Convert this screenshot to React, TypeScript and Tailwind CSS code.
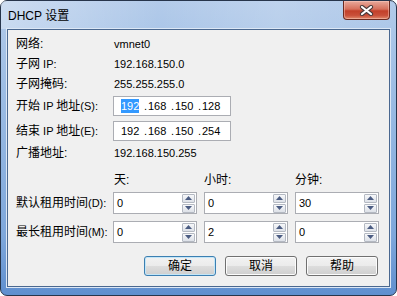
import React from "react";

const FONT = { fontFamily: '"Liberation Sans", "Noto Sans CJK SC", sans-serif' };

const Cjk = ({ children }: { children: React.ReactNode }) => (
  <span className="text-[12px]">{children}</span>
);

const IpBox = ({ parts, selectFirst }: { parts: string[]; selectFirst?: boolean }) => (
  <div className="flex h-[20px] w-[118px] items-center border border-[#abadb3] bg-white pl-[7px]">
    {parts.map((p, i) => (
      <div key={i} className="flex items-center">
        {i > 0 && <span className="w-[4px]">.</span>}
        <span className="w-[23px]">
          <span className={selectFirst && i === 0 ? "bg-[#3399ff] py-[1px] text-white" : ""}>{p}</span>
        </span>
      </div>
    ))}
  </div>
);

const SpinBtn = ({ up }: { up?: boolean }) => (
  <div className="flex h-[9px] w-[13px] items-center justify-center rounded-[1px] border border-[#b4b9c2] bg-[linear-gradient(#f7f8fa,#dde1e8)]">
    <svg width="7" height="4" viewBox="0 0 7 4">
      <path d={up ? "M0 4 L3.5 0 L7 4 Z" : "M0 0 L3.5 4 L7 0 Z"} fill="#4b5c82" />
    </svg>
  </div>
);

const Spin = ({ value }: { value: string }) => (
  <div className="flex h-[22px] w-[84px] border border-[#abadb3] bg-white">
    <div className="flex-1 pl-[3px] leading-[20px]">{value}</div>
    <div className="flex flex-col justify-center gap-[1px] pr-[1px]">
      <SpinBtn up />
      <SpinBtn />
    </div>
  </div>
);

const Button = ({ label, primary }: { label: string; primary?: boolean }) => (
  <div
    className={`flex h-[20px] w-[72px] items-center justify-center rounded-[3px] border bg-[linear-gradient(#f2f2f2_0%,#ebebeb_50%,#dddddd_51%,#cfcfcf_100%)] ${
      primary
        ? "border-[#3c7fb1] shadow-[inset_0_0_0_1px_#c3e6f8]"
        : "border-[#707070] shadow-[inset_0_0_0_1px_#fcfcfc]"
    }`}
  >
    <Cjk>{label}</Cjk>
  </div>
);

const Row = ({ label, children, className = "" }: { label: React.ReactNode; children?: React.ReactNode; className?: string }) => (
  <div className={`flex h-[20px] items-center ${className}`}>
    <div className="w-[97px]">{label}</div>
    {children}
  </div>
);

export default function App() {
  return (
    <div className="h-[296px] w-[397px] overflow-hidden bg-white text-[11px] text-black" style={FONT}>
      <div className="flex h-full flex-col rounded-[7px] border border-[#27354b] bg-[linear-gradient(180deg,#b3cbea_0%,#9dbde4_30%,#7ea7db_80%,#5f8fcf_100%)]">
        {/* title bar */}
        <div className="flex h-[28px] items-start justify-between bg-[linear-gradient(90deg,rgba(255,255,255,0.35),rgba(255,255,255,0)_40%,rgba(255,255,255,0.15)_70%,rgba(255,255,255,0))]">
          <div className="pl-[7px] pt-[6px] text-[12px]">
            DHCP <Cjk>设置</Cjk>
          </div>
          <div className="mr-[6px] flex h-[19px] w-[47px] items-center justify-center rounded-b-[4px] border border-t-0 border-[#6b2a20] bg-[linear-gradient(#e8aa9c_0%,#d6705c_45%,#c2402a_55%,#c9503a_80%,#e08a6c_100%)] shadow-[inset_0_0_0_1px_rgba(255,210,200,0.45)]">
            <svg width="15" height="11" viewBox="0 0 15 11">
              <path d="M3 2 L12 9 M12 2 L3 9" stroke="#4a3a3a" strokeWidth="4.2" strokeLinecap="round" />
              <path d="M3 2 L12 9 M12 2 L3 9" stroke="#ffffff" strokeWidth="2.2" strokeLinecap="round" />
            </svg>
          </div>
        </div>

        {/* client area */}
        <div className="mx-[6px] mb-[8px] flex-1 border border-[#4a6890] bg-[#f0f0f0] pl-[8px] pt-[4px] shadow-[0_0_0_1px_#dce7f5]">
          <Row label={<Cjk>网络:</Cjk>}>
            <span className="pl-[1px]">vmnet0</span>
          </Row>
          <Row label={<><Cjk>子网</Cjk> IP:</>}>
            <span className="pl-[1px]">192.168.150.0</span>
          </Row>
          <Row label={<Cjk>子网掩码:</Cjk>}>
            <span className="pl-[1px]">255.255.255.0</span>
          </Row>
          <Row className="mt-[2px]" label={<><Cjk>开始</Cjk> IP <Cjk>地址</Cjk>(S):</>}>
            <IpBox parts={["192", "168", "150", "128"]} selectFirst />
          </Row>
          <Row className="mt-[5px]" label={<><Cjk>结束</Cjk> IP <Cjk>地址</Cjk>(E):</>}>
            <IpBox parts={["192", "168", "150", "254"]} />
          </Row>
          <Row className="mt-[2px]" label={<Cjk>广播地址:</Cjk>}>
            <span className="pl-[1px]">192.168.150.255</span>
          </Row>

          <div className="mt-[7px] flex h-[20px] items-center pl-[97px]">
            <div className="w-[91px] pl-[1px]"><Cjk>天:</Cjk></div>
            <div className="w-[91px]"><Cjk>小时:</Cjk></div>
            <div className="w-[91px]"><Cjk>分钟:</Cjk></div>
          </div>

          <div className="mt-[2px] flex h-[22px] items-center">
            <div className="w-[97px]"><Cjk>默认租用时间</Cjk>(D):</div>
            <div className="flex gap-[7px]">
              <Spin value="0" />
              <Spin value="0" />
              <Spin value="30" />
            </div>
          </div>
          <div className="mt-[7px] flex h-[22px] items-center">
            <div className="w-[97px]"><Cjk>最长租用时间</Cjk>(M):</div>
            <div className="flex gap-[7px]">
              <Spin value="0" />
              <Spin value="2" />
              <Spin value="0" />
            </div>
          </div>

          <div className="mt-[13px] flex justify-end gap-[9px] pr-[11px]">
            <Button label="确定" primary />
            <Button label="取消" />
            <Button label="帮助" />
          </div>
        </div>
      </div>
    </div>
  );
}
